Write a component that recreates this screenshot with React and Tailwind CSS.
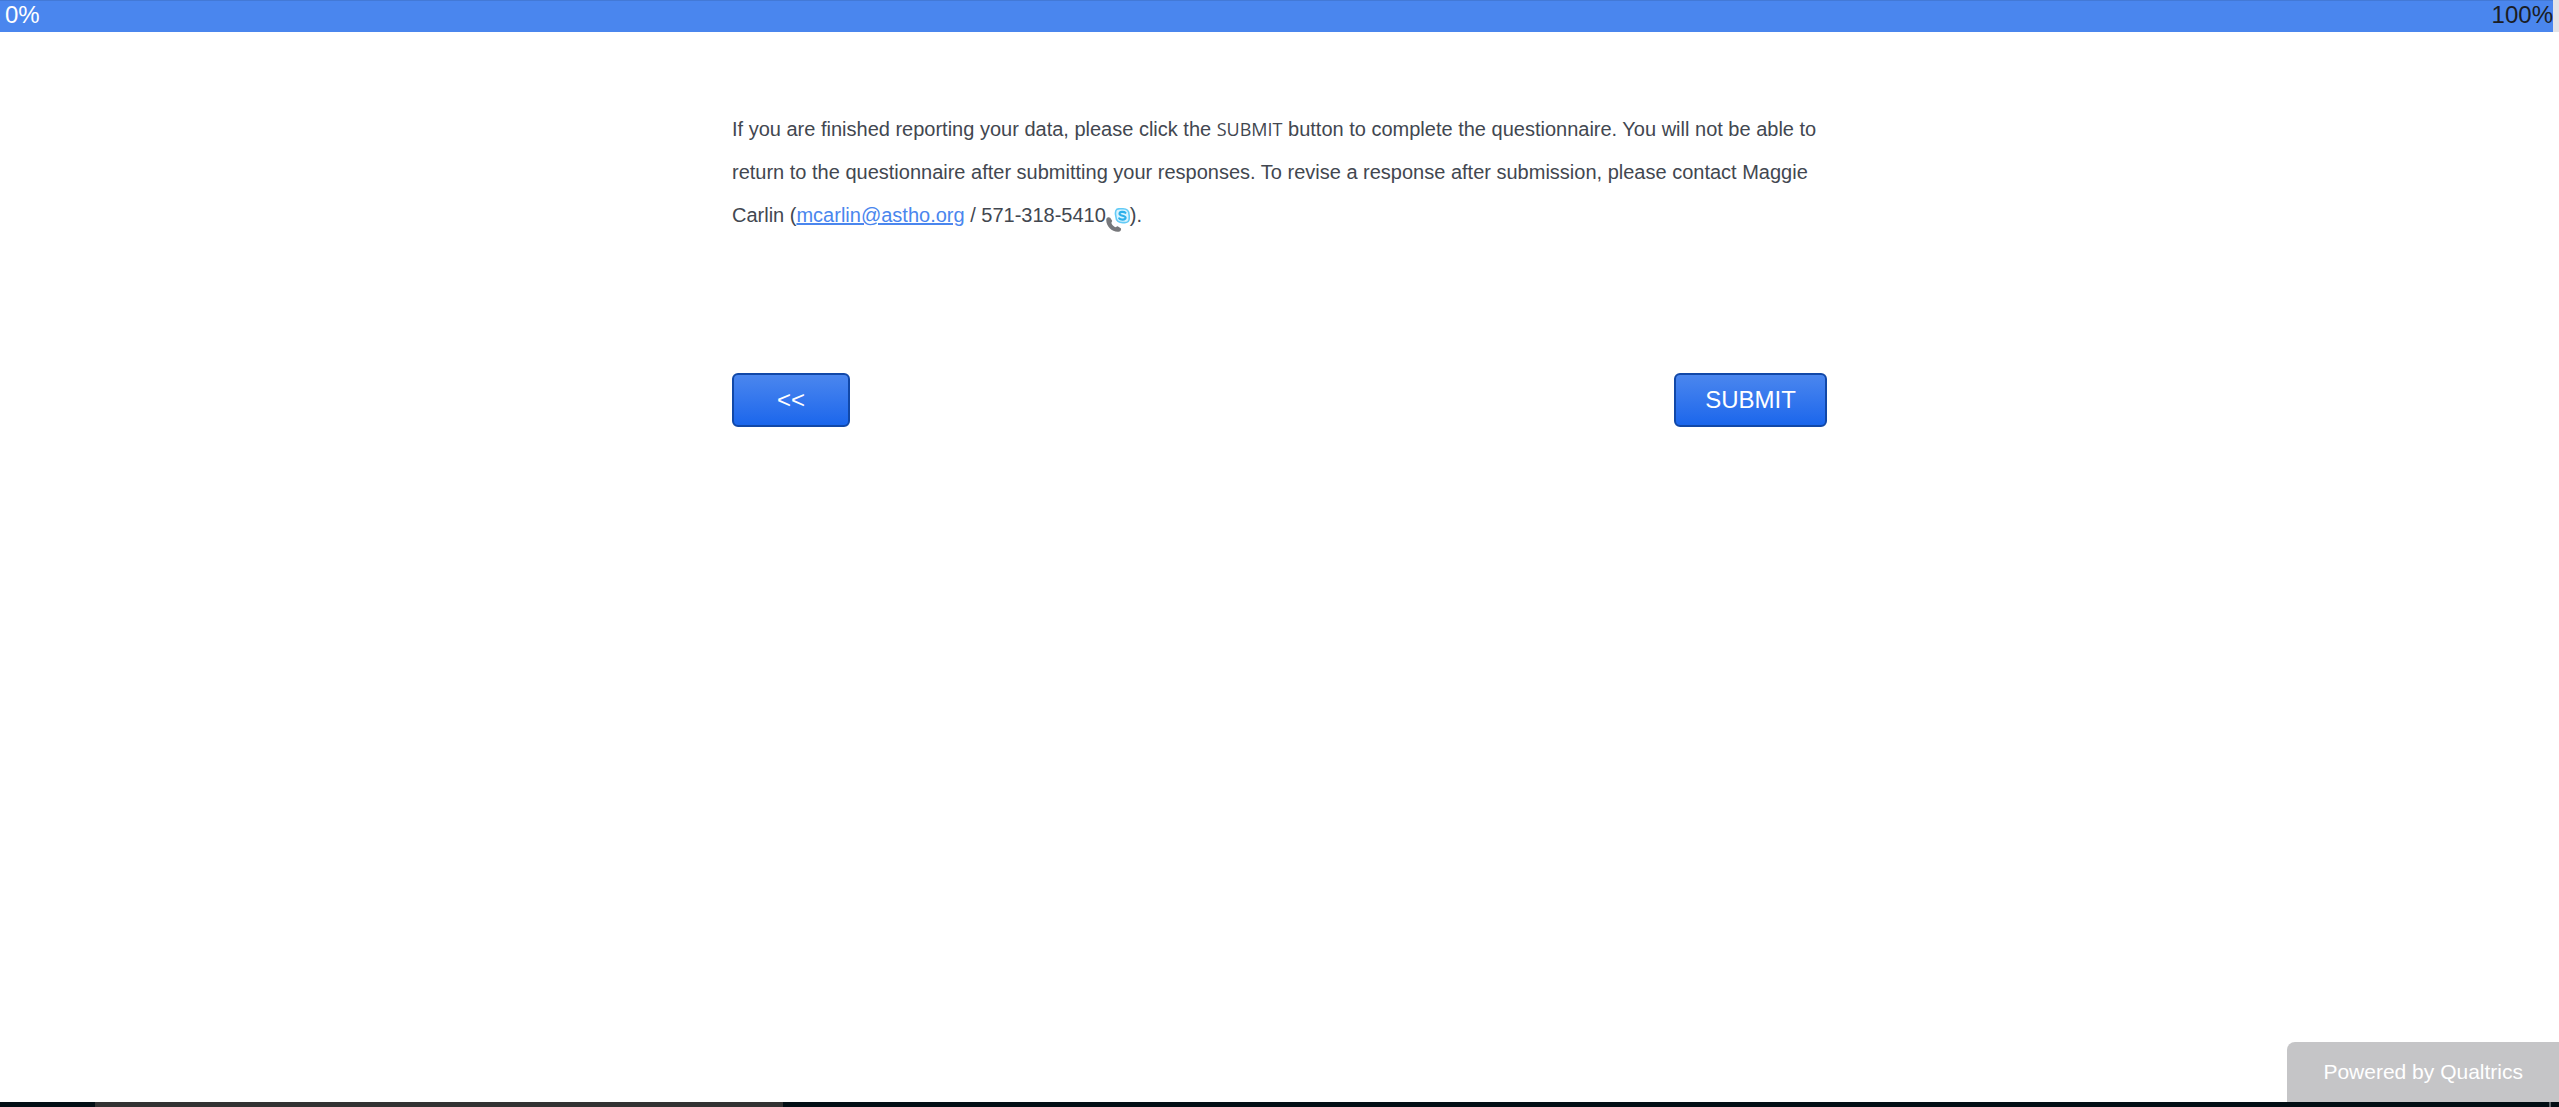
import React from "react";

function ProgressBar() {
  return (
    <div
      role="progressbar"
      aria-label="Survey completion"
      aria-valuemin={0}
      aria-valuemax={100}
      aria-valuenow={100}
      className="bg-[#e3e3e6] pr-1.5"
    >
      <div className="flex h-8 justify-between border-t border-[#4379d6] bg-[#4a86ee] pl-[5px] text-2xl leading-7">
        <span className="text-white">0%</span>
        <span className="text-[#1b1d24]">100%</span>
      </div>
    </div>
  );
}

function SkypeCallIcon() {
  return (
    <svg viewBox="0 0 24 24" className="-mb-[7px] inline-block size-6" aria-hidden="true">
      <path
        d="M0.4 10.8 C0.8 9.2 3 8.6 4.2 9.8 L6 12.4 C6.4 13.6 5.4 14.2 5.4 15 C6 17 7.6 18.6 9.4 19.2 C10.4 19.2 10.8 18 12 18.4 L14.8 20.2 C15.6 21.4 14.6 23.4 12.6 23.8 C6 24.6 -0.8 17.4 0.4 10.8 Z"
        fill="#77787b"
      />
      <path
        d="M11 1.2 C12.6 0.4 14 0.8 17 0.8 C21 0.8 23 3 23 6.6 C23.6 8 23 9 23.2 11 C22.8 14 20.6 14.8 18 14.6 C13 15 9.8 13 9.9 8.4 C9.2 5.6 9 2.8 11 1.2 Z"
        fill="#d9f3fe"
        stroke="#63cbf6"
        strokeWidth="1.6"
      />
      <path
        d="M19.4 4.8 C18 3.4 13.6 3.4 13.5 5.7 C13.5 8.2 19.6 7.2 19.6 9.7 C19.5 12.2 14.4 12 13.2 10.4"
        fill="none"
        stroke="#2db0ea"
        strokeWidth="2.1"
        strokeLinecap="round"
      />
    </svg>
  );
}

function NavButton({ children, className }) {
  return (
    <button
      type="button"
      className={
        "h-[54px] rounded-md border-2 border-[#1148a8] bg-linear-to-b from-[#4a86ee] to-[#1a66ec] text-2xl text-white " +
        className
      }
    >
      {children}
    </button>
  );
}

export default function App() {
  return (
    <div className="flex min-h-screen flex-col bg-white font-['Liberation_Sans',Arial,sans-serif]">
      <ProgressBar />
      <main className="mx-auto w-full max-w-[1095px] grow">
        <p className="mt-[76px] text-xl leading-[43px] text-[#424750]">
          If you are finished reporting your data, please click the{" "}
          <span className="font-['Open_Sans',sans-serif] text-lg leading-none">SUBMIT</span>{" "}
          button to complete the questionnaire. You will not be able to return to the questionnaire
          after submitting your responses. To revise a response after submission, please contact
          Maggie Carlin (
          <a href="mailto:mcarlin@astho.org" className="text-[#4a86ee] underline decoration-2">
            mcarlin@astho.org
          </a>{" "}
          / 571-318-5410
          <SkypeCallIcon />
          ).
        </p>
        <div className="mt-[136px] flex justify-between">
          <NavButton className="w-[118px]">&lt;&lt;</NavButton>
          <NavButton className="w-[153px]">SUBMIT</NavButton>
        </div>
      </main>
      <footer>
        <div className="flex justify-end">
          <a
            href="https://www.qualtrics.com"
            className="flex h-[60px] items-center rounded-tl-lg bg-[#c5c5c7] px-9 text-[21px] text-white"
          >
            Powered by Qualtrics
          </a>
        </div>
        <div className="flex h-[5px] bg-[#020e14]">
          <div className="ml-[95px] w-[688px] bg-[#323232]" />
          <div className="mr-2 ml-auto w-0.5 bg-[#5c6468]" />
        </div>
      </footer>
    </div>
  );
}
